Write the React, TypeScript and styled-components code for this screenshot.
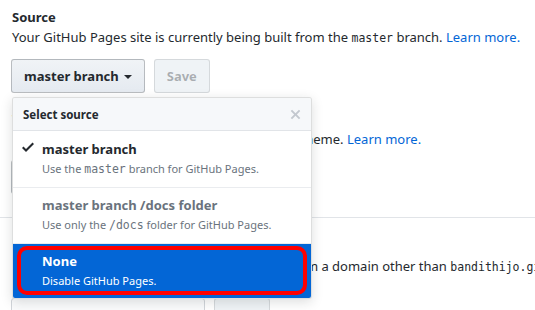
import React from "react";
import styled, { createGlobalStyle } from "styled-components";

const GlobalStyle = createGlobalStyle`
  html, body {
    margin: 0;
    padding: 0;
    background: #fff;
    overflow: hidden;
  }
  body {
    font-family: "Noto Sans", "Open Sans", sans-serif;
    font-size: 13px;
    color: #24292e;
  }
`;

const App = () => {
  return (
    <>
      <GlobalStyle />
      <Page>
        <Section pb={16}>
          <Heading>Source</Heading>
          <Note mb={10}>
            Your GitHub Pages site is currently being built from the <Code>master</Code> branch.{" "}
            <Link>Learn more.</Link>
          </Note>
          <ButtonRow>
            <Button>
              master branch <Caret />
            </Button>
            <Button disabled>Save</Button>
            <Menu>
              <MenuHeader>
                <MenuTitle>Select source</MenuTitle>
                <CloseIcon />
              </MenuHeader>
              <MenuItem h={56}>
                <CheckIcon />
                <ItemTitle>master branch</ItemTitle>
                <ItemDesc>
                  Use the <Code>master</Code> branch for GitHub Pages.
                </ItemDesc>
              </MenuItem>
              <MenuItem h={55} muted>
                <ItemTitle>master branch /docs folder</ItemTitle>
                <ItemDesc>
                  Use only the <Code>/docs</Code> folder for GitHub Pages.
                </ItemDesc>
              </MenuItem>
              <MenuItem h={54} active last>
                <ItemTitle>None</ItemTitle>
                <ItemDesc active>Disable GitHub Pages.</ItemDesc>
                <Highlight />
              </MenuItem>
            </Menu>
          </ButtonRow>
        </Section>

        <Section pb={23}>
          <Heading>Theme Chooser</Heading>
          <Note mb={10}>
            Select a theme to publish your site with a Jekyll theme. <Link>Learn more.</Link>
          </Note>
          <ButtonRow>
            <Button>Choose a theme</Button>
          </ButtonRow>
        </Section>

        <Divider />

        <Section pb={0}>
          <Heading>Custom domain</Heading>
          <Note mb={20}>
            Custom domains allow you to serve your site from a domain other than{" "}
            <Code>bandithijo.github.io</Code>. <Link>Learn more.</Link>
          </Note>
          <ButtonRow>
            <DomainInput />
            <Button disabled>Save</Button>
          </ButtonRow>
        </Section>
      </Page>
    </>
  );
};

const CheckIcon = () => (
  <CheckSvg viewBox="0 0 12 16" width="12" height="16">
    <path fillRule="evenodd" d="M12 5l-8 8-4-4 1.5-1.5L4 10l6.5-6.5L12 5z" />
  </CheckSvg>
);

const CloseIcon = () => (
  <CloseSvg viewBox="0 0 12 16" width="11" height="15">
    <path
      fillRule="evenodd"
      d="M7.48 8l3.75 3.75-1.48 1.48L6 9.48l-3.75 3.75-1.48-1.48L4.52 8 .77 4.25l1.48-1.48L6 6.52l3.75-3.75 1.48 1.48L7.48 8z"
    />
  </CloseSvg>
);

const Page = styled.div`
  width: 700px;
  padding: 7px 0 0 11px;
`;

const Section = styled.div<{ pb: number }>`
  display: flex;
  flex-direction: column;
  padding-bottom: ${(p) => p.pb}px;
`;

const Heading = styled.div`
  font-weight: 700;
  font-size: 13px;
  line-height: 20px;
  padding-left: 1px;
`;

const Note = styled.div<{ mb: number }>`
  font-size: 13px;
  line-height: 21px;
  white-space: nowrap;
  padding-left: 1px;
  margin-bottom: ${(p) => p.mb}px;
`;

const Code = styled.code`
  font-family: "DejaVu Sans Mono", "Liberation Mono", monospace;
  font-size: 11.5px;
`;

const Link = styled.a`
  color: #0366d6;
  cursor: pointer;
`;

const ButtonRow = styled.div`
  position: relative;
  display: flex;
  align-items: center;
  gap: 9px;
`;

const Button = styled.button`
  display: inline-flex;
  align-items: center;
  height: 34px;
  padding: 0 12px;
  font-family: inherit;
  font-size: 13px;
  font-weight: 700;
  color: ${(p) => (p.disabled ? "rgba(36,41,46,0.35)" : "#24292e")};
  background: ${(p) => (p.disabled ? "#eff3f6" : "linear-gradient(-180deg, #f0f3f6, #e6ebf1 90%)")};
  border: 1px solid ${(p) => (p.disabled ? "rgba(27,31,35,0.12)" : "rgba(27,31,35,0.25)")};
  border-radius: 3px;
`;

const Caret = styled.span`
  display: inline-block;
  margin-left: 5px;
  margin-top: 2px;
  border-top: 4px solid #24292e;
  border-left: 4px solid transparent;
  border-right: 4px solid transparent;
`;

const Menu = styled.div`
  position: absolute;
  top: calc(100% + 4px);
  left: 1px;
  z-index: 10;
  width: 298px;
  background: #fff;
  border: 1px solid rgba(27, 31, 35, 0.15);
  border-radius: 3px;
  box-shadow: 0 3px 12px rgba(27, 31, 35, 0.15);
  overflow: hidden;
`;

const MenuHeader = styled.div`
  display: flex;
  align-items: center;
  justify-content: space-between;
  height: 32px;
  padding: 0 10px;
  background: #f6f8fa;
  border-bottom: 1px solid #e1e4e8;
`;

const MenuTitle = styled.span`
  font-size: 11.5px;
  font-weight: 700;
`;

const CloseSvg = styled.svg`
  fill: #c3c8cf;
`;

const MenuItem = styled.div<{ h: number; muted?: boolean; active?: boolean; last?: boolean }>`
  position: relative;
  display: flex;
  flex-direction: column;
  justify-content: center;
  height: ${(p) => p.h}px;
  padding-left: 29px;
  background: ${(p) => (p.active ? "#0366d6" : "#fff")};
  color: ${(p) => (p.active ? "#fff" : p.muted ? "#6a737d" : "#24292e")};
  border-bottom: ${(p) => (p.last ? "none" : "1px solid #eaecef")};
`;

const CheckSvg = styled.svg`
  position: absolute;
  left: 9px;
  top: 8px;
  fill: #24292e;
`;

const ItemTitle = styled.div`
  font-size: 13px;
  font-weight: 700;
  line-height: 19px;
`;

const ItemDesc = styled.div<{ active?: boolean }>`
  font-size: 11px;
  line-height: 19px;
  color: ${(p) => (p.active ? "#fff" : "#6a737d")};
`;

const Highlight = styled.div`
  position: absolute;
  left: 4px;
  right: 4px;
  top: 2px;
  bottom: 3px;
  border: 4px solid #ff0000;
  border-radius: 10px;
  pointer-events: none;
`;

const Divider = styled.div`
  height: 1px;
  background: #e1e4e8;
  margin: 0 0 18px -11px;
`;

const DomainInput = styled.div`
  width: 192px;
  height: 32px;
  border: 1px solid #d1d5da;
  border-radius: 3px;
  background: #fafbfc;
`;

export default App;
